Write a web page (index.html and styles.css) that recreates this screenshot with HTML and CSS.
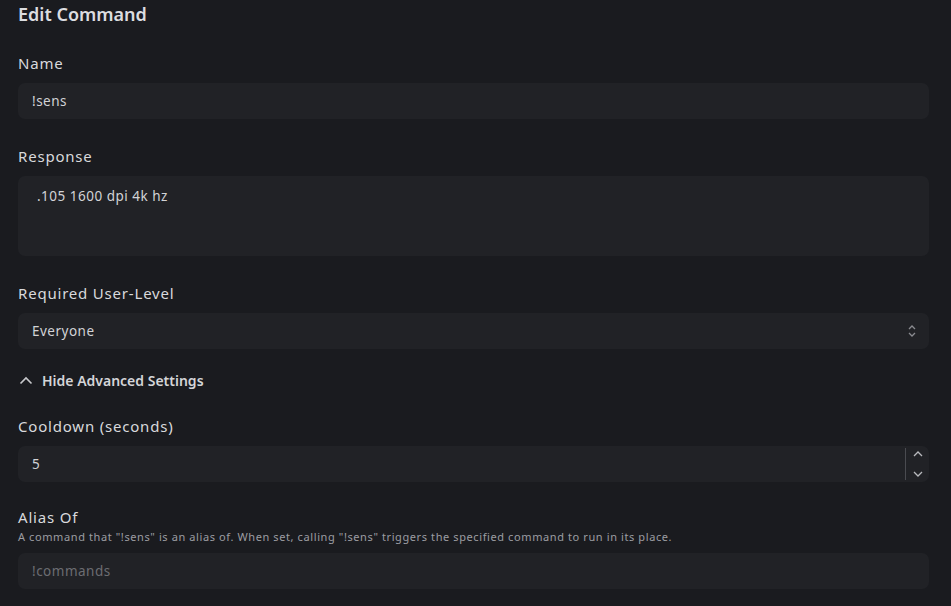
FILE: index.html
```html
<!DOCTYPE html>
<html lang="en">
<head>
  <meta charset="UTF-8">
  <meta name="viewport" content="width=device-width, initial-scale=1.0">
  <title>Edit Command</title>
  <link rel="stylesheet" href="styles.css">
</head>
<body>
  <div class="container">
    <h1>Edit Command</h1>

    <div class="campo primeiro">
      <label>Name</label>
      <div class="input">!sens</div>
    </div>

    <div class="campo">
      <label>Response</label>
      <div class="input textarea">.105 1600 dpi 4k hz</div>
    </div>

    <div class="campo">
      <label>Required User-Level</label>
      <div class="input select">
        <span>Everyone</span>
        <svg width="10" height="14" viewBox="0 0 10 14" fill="none" stroke="#8a8b90" stroke-width="1.3">
          <path d="M2 5 L5 2 L8 5"/>
          <path d="M2 9 L5 12 L8 9"/>
        </svg>
      </div>
    </div>

    <div class="toggle">
      <svg width="14" height="10" viewBox="0 0 14 10" fill="none" stroke="#c8c9cc" stroke-width="1.6">
        <path d="M1.5 7.5 L7 2 L12.5 7.5"/>
      </svg>
      <span>Hide Advanced Settings</span>
    </div>

    <div class="campo cooldown">
      <label>Cooldown (seconds)</label>
      <div class="input numero">
        <span class="valor">5</span>
        <div class="spin">
          <svg width="12" height="8" viewBox="0 0 12 8" fill="none" stroke="#b8b9bd" stroke-width="1.3">
            <path d="M2 6 L6 2 L10 6"/>
          </svg>
          <svg width="12" height="8" viewBox="0 0 12 8" fill="none" stroke="#b8b9bd" stroke-width="1.3">
            <path d="M2 2 L6 6 L10 2"/>
          </svg>
        </div>
      </div>
    </div>

    <div class="campo alias">
      <label class="sem-margem">Alias Of</label>
      <p class="ajuda">A command that "!sens" is an alias of. When set, calling "!sens" triggers the specified command to run in its place.</p>
      <div class="input placeholder">!commands</div>
    </div>
  </div>
</body>
</html>
```

FILE: styles.css
```css
body {
  font-family: "Noto Sans", sans-serif;
  background-color: #1a1b1f;
  color: #d6d7da;
  margin: 0;
  padding: 0;
}

.container {
  padding: 0 22px 0 18px;
}

h1 {
  font-size: 18px;
  font-weight: 600;
  margin: 0;
  padding-top: 1px;
  line-height: 26px;
  color: #dcdde0;
}

.campo {
  margin-top: 27px;
}

.campo.primeiro {
  margin-top: 26px;
}

.campo.cooldown {
  margin-top: 26px;
}

.campo.alias {
  margin-top: 25px;
}

.campo label {
  display: block;
  font-size: 15px;
  letter-spacing: 0.8px;
  line-height: 20px;
  margin-bottom: 10px;
  color: #d8d9dc;
}

.campo label.sem-margem {
  margin-bottom: 0;
}

.input {
  background-color: #212226;
  border-radius: 7px;
  height: 36px;
  padding: 0 14px;
  display: flex;
  align-items: center;
  font-size: 13.5px;
  letter-spacing: 0.5px;
  color: #d2d3d6;
  box-sizing: border-box;
}

.textarea {
  height: 80px;
  align-items: flex-start;
  padding-top: 11px;
  padding-left: 19px;
}

.select {
  justify-content: space-between;
  padding-right: 12px;
}

.numero {
  padding-right: 0;
  justify-content: space-between;
}

.spin {
  width: 24px;
  height: 32px;
  border-left: 1px solid #4a4b50;
  display: flex;
  flex-direction: column;
  justify-content: space-between;
  align-items: center;
  padding: 2px 0;
  box-sizing: border-box;
}

.toggle {
  display: flex;
  align-items: center;
  gap: 9px;
  margin-top: 22px;
  font-size: 14px;
  font-weight: 600;
  color: #d4d5d8;
  padding-left: 1px;
}

.ajuda {
  margin: 2px 0 9px;
  font-size: 11px;
  letter-spacing: 0.6px;
  color: #9c9da2;
}

.placeholder {
  color: #6c6d72;
}
```
